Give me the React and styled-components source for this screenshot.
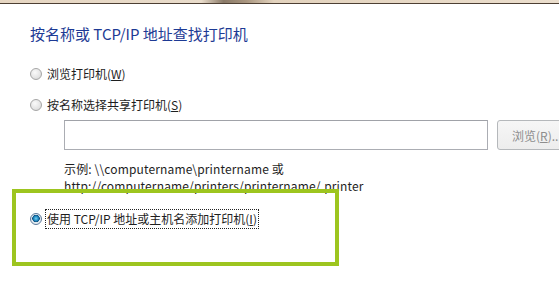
import React from 'react';
import styled, { createGlobalStyle } from 'styled-components';

const GlobalStyle = createGlobalStyle`
  html, body {
    margin: 0;
    padding: 0;
    background: #ffffff;
    overflow: hidden;
  }
  body {
    font-family: "Noto Sans CJK SC", "Noto Sans", sans-serif;
    color: #1e1e1e;
  }
`;

const Window = styled.div`
  position: relative;
  width: 559px;
  height: 285px;
  overflow: hidden;
  background: #fff;
`;

// Sliver of the title bar above the wizard body
const TopBar = styled.div`
  height: 3px;
  border-bottom: 1px solid #4d3f33;
  background: linear-gradient(
    90deg,
    #e6d6c2 0%,
    #e9dccb 36%,
    #8a7a68 40%,
    #a8957f 44%,
    #e3d3be 49%,
    #ebdecd 100%
  );
`;

const Body = styled.div`
  display: flex;
  flex-direction: column;
  padding-left: 30px;
`;

const Title = styled.div`
  margin-top: 20px;
  font-size: 15px;
  line-height: 20px;
  color: #1d3a94;
`;

const RadioRow = styled.label`
  display: flex;
  align-items: center;
  gap: 3px;
  height: 19px;
  margin-top: ${({ $top }) => $top}px;
  font-size: 12px;
`;

const Radio = styled.span`
  box-sizing: border-box;
  width: 12px;
  height: 12px;
  border-radius: 50%;
  border: 1px solid ${({ $checked }) => ($checked ? '#5c7a9a' : '#a6a6a6')};
  background: ${({ $checked }) =>
    $checked
      ? 'radial-gradient(circle at 50% 45%, #6fd3f5 0, #1b7fb8 2.5px, #0e4d7a 3.5px, #dfe8ef 4px, #f4f6f8 100%)'
      : 'radial-gradient(circle at 40% 35%, #fafafa 0, #e4e4e4 60%, #cfcfcf 100%)'};
  flex: none;
`;

const LabelText = styled.span`
  padding: 1px 1px;
  line-height: 16px;
  border: 1px ${({ $focused }) => ($focused ? 'dotted #222' : 'solid transparent')};
`;

const Key = styled.span`
  text-decoration: underline;
`;

const Indented = styled.div`
  display: flex;
  flex-direction: column;
  padding-left: 34px;
`;

const InputRow = styled.div`
  display: flex;
  gap: 9px;
  margin-top: 6px;
`;

const PathInput = styled.div`
  box-sizing: border-box;
  width: 424px;
  height: 30px;
  border: 1px solid #abadb3;
  border-top-color: #a0a2a8;
  background: #fff;
  flex: none;
`;

const BrowseButton = styled.div`
  box-sizing: border-box;
  width: 80px;
  height: 30px;
  flex: none;
  display: flex;
  align-items: center;
  padding-left: 14px;
  border: 1px solid #b5b8bb;
  border-radius: 3px;
  background: linear-gradient(#f6f6f6, #ededed);
  color: #8d8d8d;
  font-size: 12px;
  white-space: nowrap;
`;

const Example = styled.div`
  margin-top: 10px;
  font-size: 12px;
  line-height: 17px;
  letter-spacing: 0.15px;
  white-space: nowrap;
`;

// Annotation frame drawn over the screenshot
const Highlight = styled.div`
  position: absolute;
  left: 12px;
  top: 189px;
  width: 327px;
  height: 77px;
  box-sizing: border-box;
  border: 4px solid #9dc51f;
  pointer-events: none;
`;

export default function App() {
  return (
    <Window>
      <GlobalStyle />
      <TopBar />
      <Body>
        <Title>按名称或 TCP/IP 地址查找打印机</Title>

        <RadioRow $top={20}>
          <Radio />
          <LabelText>
            浏览打印机(<Key>W</Key>)
          </LabelText>
        </RadioRow>

        <RadioRow $top={12}>
          <Radio />
          <LabelText>
            按名称选择共享打印机(<Key>S</Key>)
          </LabelText>
        </RadioRow>

        <Indented>
          <InputRow>
            <PathInput />
            <BrowseButton>
              浏览(<Key>R</Key>)...
            </BrowseButton>
          </InputRow>
          <Example>
            示例: \\computername\printername 或
            <br />
            http://computername/printers/printername/.printer
          </Example>
        </Indented>

        <RadioRow $top={15}>
          <Radio $checked />
          <LabelText $focused>
            使用 TCP/IP 地址或主机名添加打印机(<Key>I</Key>)
          </LabelText>
        </RadioRow>
      </Body>
      <Highlight />
    </Window>
  );
}
